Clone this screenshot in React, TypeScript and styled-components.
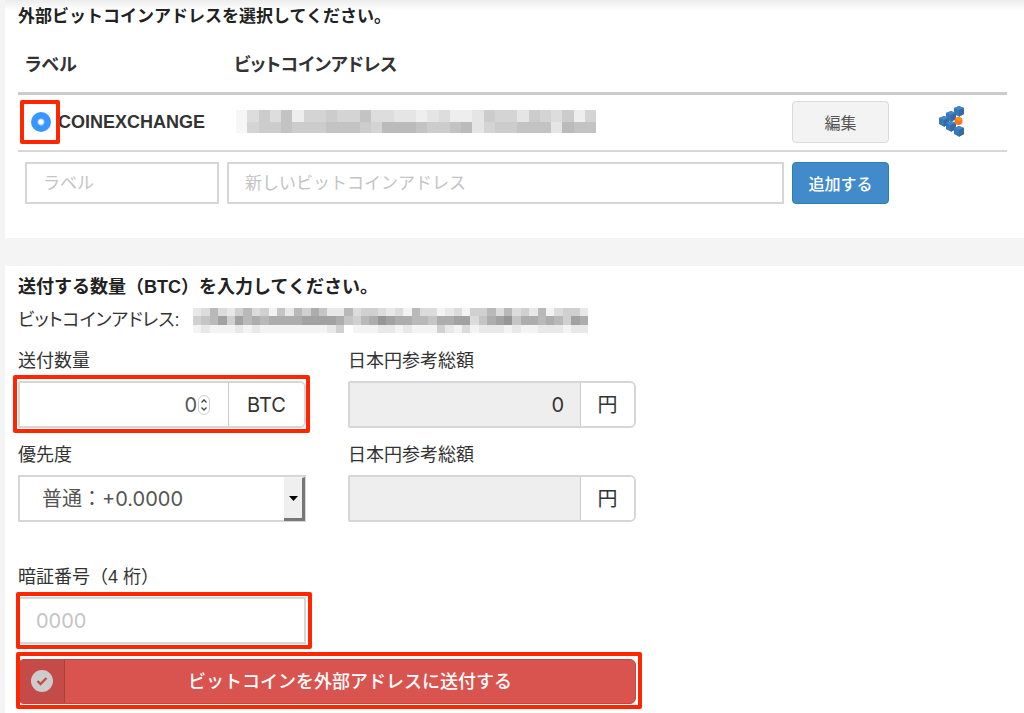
import React from "react";
import styled, { createGlobalStyle, css } from "styled-components";

const GlobalStyle = createGlobalStyle`
  * { box-sizing: border-box; }
  body {
    margin: 0;
    background: #f4f4f4;
    color: #333;
    font-family: "Liberation Sans", "Noto Sans CJK JP", sans-serif;
    font-size: 18px;
    line-height: 24px;
    font-feature-settings: "palt";
  }
  input, select, button { font-family: inherit; margin: 0; }
`;

const Page = styled.main`
  display: flex;
  flex-direction: column;
  gap: 28px;
  min-height: 100vh;
  padding-left: 5px;
`;

const Panel = styled.section<{ $first?: boolean }>`
  background: ${(p) =>
    p.$first ? "linear-gradient(#ececec, #fff 10px)" : "#fff"};
  padding: ${(p) => (p.$first ? "5px 17px 34px 13px" : "9px 17px 10px 13px")};
  flex-grow: ${(p) => (p.$first ? 0 : 1)};
`;

const Heading = styled.h2<{ $size: number }>`
  margin: 0;
  font-size: ${(p) => p.$size}px;
  line-height: 24px;
  font-weight: 700;
  font-feature-settings: normal;
  color: #222;
`;

const AddressTable = styled.table`
  width: 100%;
  margin-top: 24px;
  border-collapse: separate;
  border-spacing: 0;
  table-layout: fixed;
`;

const HeadCell = styled.th<{ $width?: number; $indent?: number }>`
  width: ${(p) => (p.$width ? `${p.$width}px` : "auto")};
  padding: 0 0 15px ${(p) => p.$indent ?? 7}px;
  border-bottom: 3px solid #cbcbcb;
  text-align: left;
  font-weight: 700;
`;

const Cell = styled.td<{ $indent?: number }>`
  height: 57px;
  padding: 0 4px 2px ${(p) => p.$indent ?? 4}px;
  border-bottom: 2px solid #d8d8d8;
  vertical-align: middle;
`;

const FormCell = styled.td<{ $indent?: number }>`
  padding: 10px 4px 0 ${(p) => p.$indent ?? 4}px;
`;

const Marked = styled.div<{ $inset: string }>`
  position: relative;
  &::after {
    content: "";
    position: absolute;
    inset: ${(p) => p.$inset};
    border: 4px solid #ff2600;
    border-radius: 2px;
    pointer-events: none;
  }
`;

const RadioLabel = styled.label`
  display: flex;
  align-items: center;
  gap: 7px;
  font-weight: 700;
  white-space: nowrap;
`;

const Radio = styled.input`
  appearance: none;
  display: block;
  width: 20px;
  height: 20px;
  border-radius: 50%;
  background: radial-gradient(circle, #fff 2px, #3897ff 4px);
`;

const boxed = css`
  border: 2px solid #d6d6d6;
  background: #fff;
  outline: none;
  &::placeholder { color: #c4c4c4; opacity: 1; }
`;

const RowInput = styled.input`
  ${boxed}
  display: block;
  width: 100%;
  height: 42px;
  padding: 1px 16px 0;
  font-size: 17px;
  font-feature-settings: normal;
`;

const RowButton = styled.button<{ $primary?: boolean }>`
  display: block;
  width: 100%;
  height: 42px;
  padding: 0;
  border: 1px solid ${(p) => (p.$primary ? "#2a7fae" : "#dadada")};
  border-radius: 4px;
  background: ${(p) => (p.$primary ? "#428bca" : "#f3f3f3")};
  color: ${(p) => (p.$primary ? "#fff" : "#555")};
  font-size: 16px;
  font-weight: ${(p) => (p.$primary ? 500 : 400)};
  font-feature-settings: normal;
`;

const Mosaic = styled.svg`
  display: block;
  flex: none;
`;

const ChainIcon = styled.svg`
  display: block;
  margin-left: 42px;
`;

const AddressLine = styled.div`
  display: flex;
  gap: 13px;
  margin: 9px 0 17px;
  height: 24px;
`;

const Form = styled.form`
  display: grid;
  grid-template-columns: 288px 288px;
  column-gap: 42px;
  row-gap: 15px;
`;

const Field = styled.div<{ $spaced?: boolean }>`
  display: flex;
  flex-direction: column;
  gap: 8px;
  margin-top: ${(p) => (p.$spaced ? 28 : 0)}px;
`;

const FieldLabel = styled.label`
  font-feature-settings: normal;
`;

const Group = styled.div<{ $readOnly?: boolean }>`
  display: flex;
  align-items: center;
  height: 47px;
  border: 2px solid #d6d6d6;
  border-radius: 2px 6px 6px 2px;
  background: ${(p) => (p.$readOnly ? "#eee" : "#fff")};
  overflow: hidden;
`;

const GroupInput = styled.input<{ $flush?: boolean }>`
  flex: 1;
  min-width: 0;
  height: 100%;
  border: 0;
  outline: none;
  background: transparent;
  color: ${(p) => (p.$flush ? "#555" : "#333")};
  padding: 0 ${(p) => (p.$flush ? 1 : 16)}px 0 16px;
  font-family: Inter, sans-serif;
  font-size: 20px;
  text-align: right;
  appearance: textfield;
  &::-webkit-inner-spin-button { appearance: none; margin: 0; }
`;

const Spinner = styled.svg`
  flex: none;
  margin-right: 18px;
`;

const Addon = styled.span<{ $width: number }>`
  display: flex;
  align-items: center;
  justify-content: center;
  width: ${(p) => p.$width}px;
  height: 100%;
  border-left: 1px solid #ccc;
  background: #fff;
  font-family: Inter, "Noto Sans CJK JP", sans-serif;
  font-size: 20px;
`;

const SelectBox = styled.div`
  position: relative;
`;

const Select = styled.select`
  ${boxed}
  appearance: none;
  display: block;
  width: 100%;
  height: 47px;
  padding: 0 32px 0 22px;
  border-radius: 0;
  color: #555;
  font-family: Inter, "Noto Sans CJK JP", sans-serif;
  font-size: 20px;
  font-feature-settings: normal;
`;

const SelectArrow = styled.span`
  position: absolute;
  top: 2px;
  right: 1px;
  bottom: 1px;
  display: flex;
  align-items: center;
  justify-content: center;
  width: 21px;
  border: solid;
  border-width: 1px 3px 3px 0;
  border-color: #f6f6f6 #777 #777 #f6f6f6;
  background: #efefef;
  pointer-events: none;
`;

const PinInput = styled.input`
  ${boxed}
  display: block;
  width: 100%;
  height: 47px;
  padding: 0 16px;
  font-family: Inter, sans-serif;
  font-size: 20px;
`;

const SubmitArea = styled(Marked)`
  grid-column: 1 / -1;
`;

const Submit = styled.button`
  display: flex;
  align-items: stretch;
  width: 100%;
  height: 45px;
  padding: 0;
  border: 1px solid #cc443f;
  border-radius: 6px;
  overflow: hidden;
  background: #d9534f;
  color: #fff;
  font-size: 18px;
  font-weight: 500;
  font-feature-settings: normal;
`;

const SubmitIcon = styled.span`
  display: flex;
  align-items: center;
  justify-content: center;
  width: 46px;
  padding-bottom: 2px;
  border-right: 1px solid #a8403c;
  background: #c44b47;
`;

const SubmitText = styled.span`
  flex: 1;
  align-self: center;
  padding-bottom: 4px;
`;

// Each character is a grey level: 0 is the darkest step, 9 the lightest.
const shade = (c: string, base: number) => {
  const v = Math.round(base + (Number(c) / 9) * (255 - base));
  return `rgb(${v},${v},${v})`;
};

function Redacted(props: {
  rows: string[];
  width: number;
  height: number;
  base: number;
}) {
  const { rows, width, height, base } = props;
  const cols = rows[0].length;
  return (
    <Mosaic
      width={width}
      height={height}
      viewBox={`0 0 ${cols} ${rows.length}`}
      preserveAspectRatio="none"
      shapeRendering="crispEdges"
      aria-hidden="true"
    >
      {rows.map((row, y) =>
        row.split("").map((c, x) => (
          <rect key={`${x}-${y}`} x={x} y={y} width={1} height={1} fill={shade(c, base)} />
        ))
      )}
    </Mosaic>
  );
}

const cubes = [
  [20, 5],
  [12, 10],
  [5, 15],
  [12, 20],
  [20, 25],
];

function Chain() {
  return (
    <ChainIcon width="26" height="31" viewBox="0 0 26 31" aria-hidden="true">
      {cubes.map(([x, y]) => (
        <g key={`${x}-${y}`} transform={`translate(${x} ${y})`}>
          <path d="M0-5 5-3V3L0 5.700-5 3V-3Z" fill="#3577b8" />
          <path d="M0-5 5-3 0-1-5-3Z" fill="#4189cc" />
          <path d="M0-1 5-3V3L0 5.700Z" fill="#38699f" />
        </g>
      ))}
      <circle cx="19.5" cy="15" r="4" fill="#f9722c" />
      <path d="M16.5 12.5a4 4 0 0 1 6.5 1.5l-3.500 1.500Z" fill="#ff9800" />
    </ChainIcon>
  );
}

export default function App() {
  return (
    <>
      <GlobalStyle />
      <Page>
        <Panel $first>
          <Heading $size={17}>外部ビットコインアドレスを選択してください。</Heading>
          <AddressTable>
            <thead>
              <tr>
                <HeadCell $width={205}>ラベル</HeadCell>
                <HeadCell $indent={11}>ビットコインアドレス</HeadCell>
                <HeadCell $width={105} />
                <HeadCell $width={114} />
              </tr>
            </thead>
            <tbody>
              <tr>
                <Cell $indent={13}>
                  <RadioLabel>
                    <Marked $inset="-12px -9px -12px -11px">
                      <Radio type="radio" name="address" defaultChecked />
                    </Marked>
                    COINEXCHANGE
                  </RadioLabel>
                </Cell>
                <Cell $indent={13}>
                  <Redacted
                    rows={["85352744344255667657763446345374", "84332333222341112332164332226122"]}
                    width={360}
                    height={23}
                    base={178}
                  />
                </Cell>
                <Cell>
                  <RowButton type="button">編集</RowButton>
                </Cell>
                <Cell>
                  <Chain />
                </Cell>
              </tr>
              <tr>
                <FormCell $indent={7}>
                  <RowInput aria-label="ラベル" placeholder="ラベル" />
                </FormCell>
                <FormCell>
                  <RowInput
                    aria-label="新しいビットコインアドレス"
                    placeholder="新しいビットコインアドレス"
                  />
                </FormCell>
                <FormCell>
                  <RowButton type="button" $primary>
                    追加する
                  </RowButton>
                </FormCell>
                <FormCell />
              </tr>
            </tbody>
          </AddressTable>
        </Panel>

        <Panel>
          <Heading $size={18}>送付する数量（BTC）を入力してください。</Heading>
          <AddressLine>
            <span>ビットコインアドレス:</span>
            <Redacted
              rows={[
                "76367536584735247736556768366876855363657386557",
                "54315132322221111245320122334221164210422323512",
                "87888787888888887598887787888578687778788777877",
              ]}
              width={395}
              height={25}
              base={150}
            />
          </AddressLine>
          <Form onSubmit={(e) => e.preventDefault()}>
            <Field>
              <FieldLabel htmlFor="amount">送付数量</FieldLabel>
              <Marked $inset="-6px -4px -5px -5px">
                <Group>
                  <GroupInput id="amount" type="number" defaultValue={0} $flush />
                  <Spinner width="12" height="20" viewBox="0 0 12 20" aria-hidden="true">
                    <rect x="0.5" y="0.5" width="11" height="19" rx="5.500" fill="#fff" stroke="#ccc" />
                    <path d="M3.500 7.500 6 5l2.500 2.500M3.500 12.500 6 15l2.500-2.500" fill="none" stroke="#444" strokeWidth="1.300" />
                  </Spinner>
                  <Addon $width={76}>BTC</Addon>
                </Group>
              </Marked>
            </Field>
            <Field>
              <FieldLabel htmlFor="total">日本円参考総額</FieldLabel>
              <Group $readOnly>
                <GroupInput id="total" readOnly defaultValue="0" />
                <Addon $width={54}>円</Addon>
              </Group>
            </Field>
            <Field>
              <FieldLabel htmlFor="priority">優先度</FieldLabel>
              <SelectBox>
                <Select id="priority">
                  <option>普通：+0.0000</option>
                </Select>
                <SelectArrow>
                  <svg width="9" height="5" viewBox="0 0 9 5" aria-hidden="true">
                    <path d="M0 0H9L4.500 5Z" fill="#000" />
                  </svg>
                </SelectArrow>
              </SelectBox>
            </Field>
            <Field>
              <FieldLabel htmlFor="fee">日本円参考総額</FieldLabel>
              <Group $readOnly>
                <GroupInput id="fee" readOnly />
                <Addon $width={54}>円</Addon>
              </Group>
            </Field>
            <Field $spaced>
              <FieldLabel htmlFor="pin">暗証番号（4 桁）</FieldLabel>
              <Marked $inset="-5px -6px -5px -2px">
                <PinInput id="pin" placeholder="0000" />
              </Marked>
            </Field>
            <SubmitArea $inset="-7px -6px -5px -2px">
              <Submit type="submit">
                <SubmitIcon>
                  <svg width="22" height="22" viewBox="0 0 22 22" aria-hidden="true">
                    <circle cx="11" cy="11" r="11" fill="#ccc" />
                    <path d="m6.500 11 3 3 6-6" fill="none" stroke="#c44b47" strokeWidth="2.400" />
                  </svg>
                </SubmitIcon>
                <SubmitText>ビットコインを外部アドレスに送付する</SubmitText>
              </Submit>
            </SubmitArea>
          </Form>
        </Panel>
      </Page>
    </>
  );
}
